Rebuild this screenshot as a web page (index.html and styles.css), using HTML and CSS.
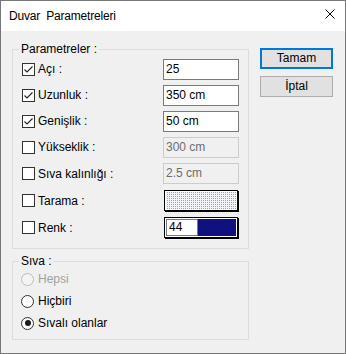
FILE: index.html
```html
<!DOCTYPE html>
<html lang="tr">
<head>
    <meta charset="UTF-8">
    <title>Duvar Parametreleri</title>
    <link rel="stylesheet" href="styles.css">
</head>
<body>
    <div class="window">
        <div class="titlebar">
            <span class="title">Duvar&nbsp; Parametreleri</span>
            <svg class="close" width="10" height="10" viewBox="0 0 10 10">
                <path d="M0.5 0.5 L9.5 9.5 M9.5 0.5 L0.5 9.5" stroke="#000" stroke-width="1" fill="none"/>
            </svg>
        </div>

        <div class="client">
            <div class="left">
                <fieldset class="group">
                    <legend>Parametreler :</legend>
                    <div class="rows">
                        <div class="row">
                            <span class="check"><svg width="11" height="11" viewBox="0 0 11 11"><path d="M1.5 5.5 L4 8 L9.5 2.5" stroke="#222" stroke-width="1.1" fill="none"/></svg></span>
                            <span class="label">Açı :</span>
                            <span class="field">25</span>
                        </div>
                        <div class="row">
                            <span class="check"><svg width="11" height="11" viewBox="0 0 11 11"><path d="M1.5 5.5 L4 8 L9.5 2.5" stroke="#222" stroke-width="1.1" fill="none"/></svg></span>
                            <span class="label">Uzunluk :</span>
                            <span class="field">350 cm</span>
                        </div>
                        <div class="row">
                            <span class="check"><svg width="11" height="11" viewBox="0 0 11 11"><path d="M1.5 5.5 L4 8 L9.5 2.5" stroke="#222" stroke-width="1.1" fill="none"/></svg></span>
                            <span class="label">Genişlik :</span>
                            <span class="field">50 cm</span>
                        </div>
                        <div class="row">
                            <span class="check"></span>
                            <span class="label">Yükseklik :</span>
                            <span class="field disabled">300 cm</span>
                        </div>
                        <div class="row tall">
                            <span class="check"></span>
                            <span class="label">Sıva kalınlığı :</span>
                            <span class="field disabled">2.5 cm</span>
                        </div>
                        <div class="row tall">
                            <span class="check"></span>
                            <span class="label">Tarama :</span>
                            <span class="swatch"><span class="pattern"></span></span>
                        </div>
                        <div class="row tall">
                            <span class="check"></span>
                            <span class="label">Renk :</span>
                            <span class="swatch">
                                <span class="color-no">44</span>
                                <span class="color-fill"></span>
                            </span>
                        </div>
                    </div>
                </fieldset>

                <fieldset class="group siva">
                    <legend>Sıva :</legend>
                    <div class="radios">
                        <div class="radio-row disabled"><span class="radio"></span><span class="label">Hepsi</span></div>
                        <div class="radio-row"><span class="radio"></span><span class="label">Hiçbiri</span></div>
                        <div class="radio-row"><span class="radio on"></span><span class="label">Sıvalı olanlar</span></div>
                    </div>
                </fieldset>
            </div>

            <div class="buttons">
                <div class="btn default">Tamam</div>
                <div class="btn">İptal</div>
            </div>
        </div>
    </div>
</body>
</html>
```

FILE: styles.css
```css
* {
    margin: 0;
    padding: 0;
    box-sizing: border-box;
}

body {
    font-family: "Liberation Sans Narrow", "Liberation Sans", Arial, sans-serif;
    font-stretch: condensed;
    font-size: 12px;
    color: #000;
    background: #fff;
}

.window {
    width: 346px;
    height: 354px;
    border: 1px solid #777;
    background: #f0f0f0;
}

/* Title bar */
.titlebar {
    height: 30px;
    background: #fff;
    display: flex;
    align-items: center;
    padding-left: 8px;
}

.title {
    font-family: "Liberation Sans", Arial, sans-serif;
    font-stretch: normal;
    font-size: 12px;
    letter-spacing: -0.2px;
}

.close {
    margin-left: auto;
    margin-right: 10px;
    align-self: flex-start;
    margin-top: 8px;
}

/* Client area */
.client {
    display: flex;
    padding: 11px 0 0 11px;
}

.left {
    width: 237px;
}

.group {
    border: 1px solid #dcdcdc;
    padding: 0;
    min-width: 0;
}

.group legend {
    margin-left: 6px;
    padding: 0 2px;
    line-height: 14px;
}

.rows {
    padding: 0 9px 7px 9px;
}

.row {
    display: flex;
    align-items: center;
    height: 26px;
}

.row.tall {
    height: 27px;
}

.check {
    width: 13px;
    height: 13px;
    border: 1px solid #333;
    background: #fff;
    display: flex;
    align-items: center;
    justify-content: center;
    flex-shrink: 0;
}

.label {
    margin-left: 3px;
    line-height: 14px;
}

.field {
    margin-left: auto;
    width: 76px;
    height: 21px;
    border: 1px solid #7a7a7a;
    background: #fff;
    padding-left: 2px;
    line-height: 19px;
}

.field.disabled {
    border-color: #cccccc;
    background: #f0f0f0;
    color: #6d6d6d;
}

/* Pattern / colour pickers */
.swatch {
    margin-left: auto;
    margin-right: 1px;
    width: 74px;
    height: 21px;
    border: 1px solid #000;
    box-shadow: 1px 1px 0 #000;
    background: #fff;
    padding: 1px;
    display: flex;
}

.pattern {
    flex: 1;
    background-color: #f2f3f7;
    background-image: conic-gradient(#9aa4c0 25%, transparent 0);
    background-size: 2px 2px;
}

.color-no {
    width: 32px;
    border: 1px solid #7a7a7a;
    background: #fff;
    padding-left: 2px;
    line-height: 15px;
}

.color-fill {
    flex: 1;
    background: #10107f;
}

/* Siva group */
.siva {
    margin-top: 5px;
}

.radios {
    padding: 0 8px 5px 8px;
}

.radio-row {
    display: flex;
    align-items: center;
    height: 22px;
}

.radio {
    width: 13px;
    height: 13px;
    border: 1px solid #333;
    border-radius: 50%;
    background: #fff;
    display: flex;
    align-items: center;
    justify-content: center;
}

.radio.on::after {
    content: '';
    width: 6px;
    height: 6px;
    border-radius: 50%;
    background: #1a1a1a;
}

.radio-row .label {
    margin-left: 4px;
}

.radio-row.disabled .radio {
    border-color: #bcbcbc;
    background: #f4f4f4;
}

.radio-row.disabled .label {
    color: #a0a0a0;
}

/* Buttons */
.buttons {
    margin: 6px 0 0 11px;
    display: flex;
    flex-direction: column;
    gap: 7px;
}

.btn {
    width: 73px;
    height: 21px;
    border: 1px solid #adadad;
    background: #e1e1e1;
    text-align: center;
    line-height: 19px;
}

.btn.default {
    border: 2px solid #0078d7;
    line-height: 17px;
}
```
